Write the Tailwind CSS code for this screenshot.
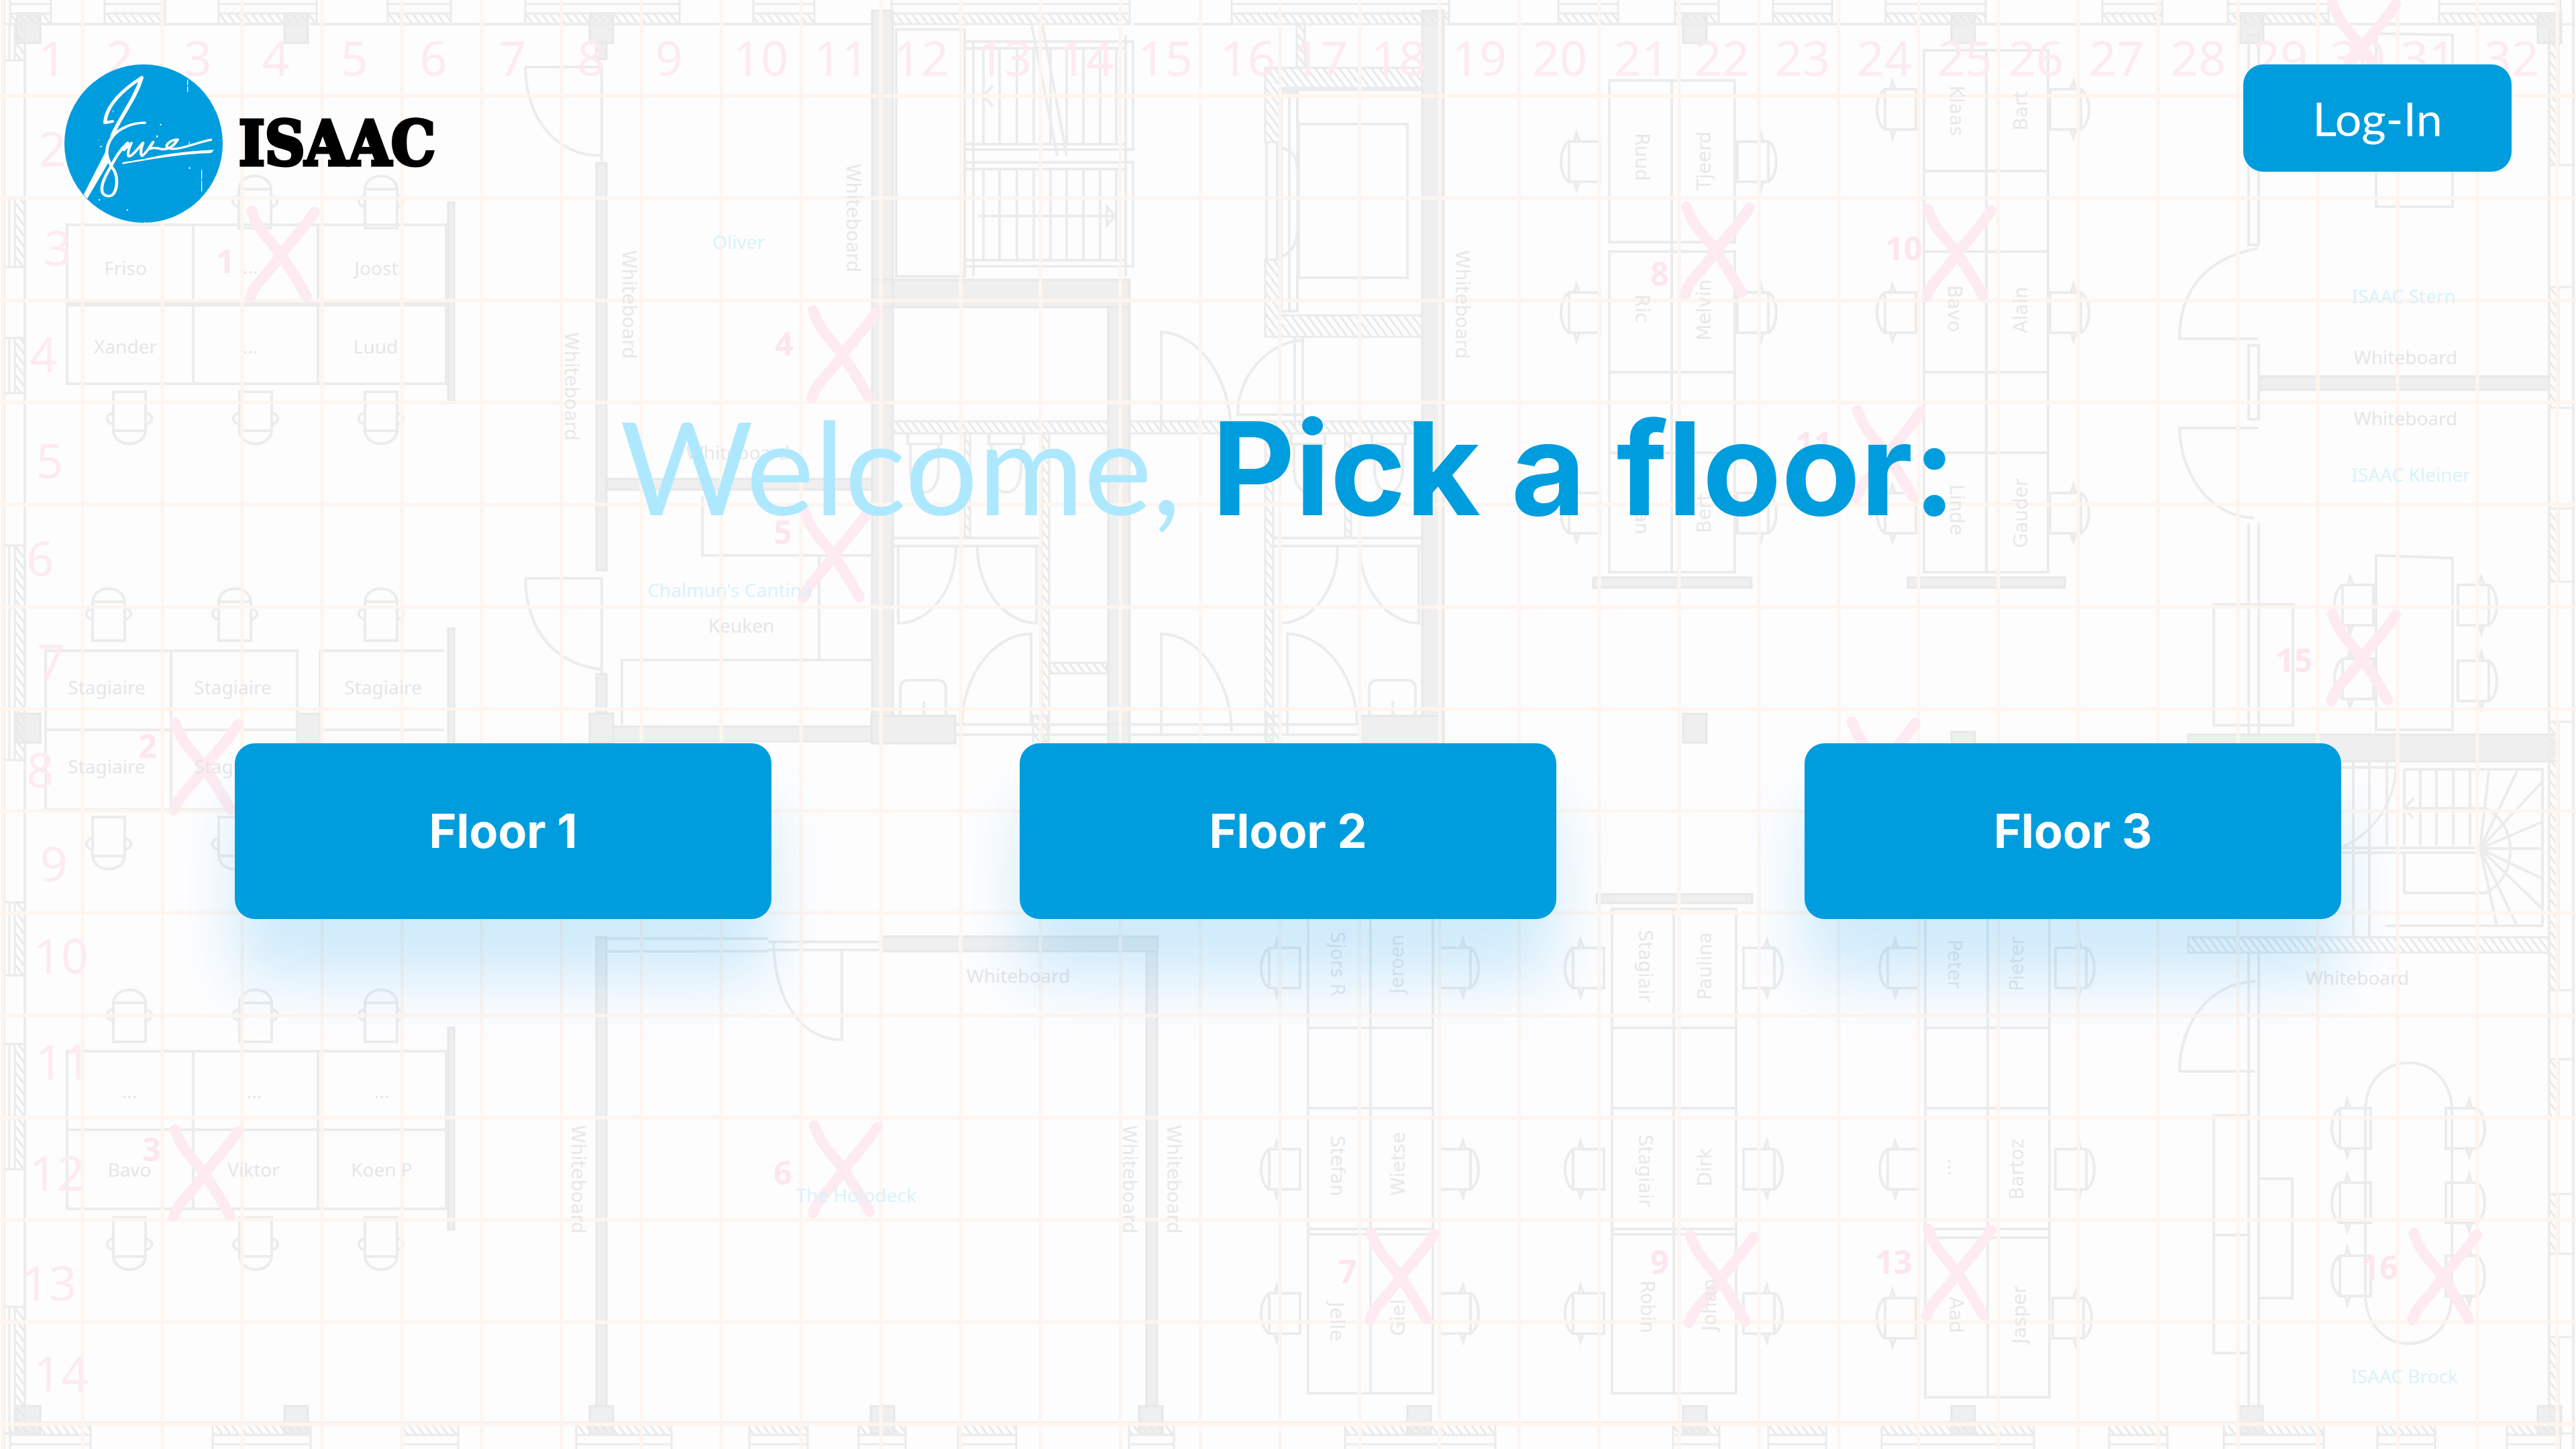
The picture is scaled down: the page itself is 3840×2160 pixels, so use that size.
<!DOCTYPE html>
<html lang="en">
<head>
<meta charset="utf-8">
<meta name="viewport" content="width=device-width, initial-scale=1">
<title>ISAAC – Pick a floor</title>
<script src="https://cdn.jsdelivr.net/npm/@tailwindcss/browser@4"></script>
</head>
<body class="relative min-h-screen overflow-x-hidden bg-[#fdfdfe] font-[Lato,sans-serif]">

<!-- Decorative floor plan behind the page -->
<svg class="absolute inset-0 h-full w-full" viewBox="0 0 3840 2160" preserveAspectRatio="xMidYMid slice" aria-hidden="true">
  <defs>
    <pattern id="hatch" width="12" height="16" patternUnits="userSpaceOnUse">
      <path d="M-3 -4L15 20M-15 -4L3 20M9 -4L27 20" stroke="#e9e9e9" stroke-width="3" fill="none"/>
    </pattern>
    <g id="chair">
      <path d="M-24 0V58H24V0ZM-24 0C-22 -26 22 -26 24 0M-25 10C-36 12 -36 24 -25 26M25 10C36 12 36 24 25 26"/>
    </g>
    <g id="side">
      <path d="M-20 -30H26V30H-20ZM-20 -30C-36 -20 -36 20 -20 30M-12 -31L-9 -42L-5 -31M-12 31L-9 42L-5 31"/>
    </g>
    <path id="cross" d="M4 0C14 30 30 42 48 66C64 90 76 110 86 128M98 2C80 30 60 48 46 68C30 95 10 105 2 130"/>
  </defs>

  <!-- walls -->
  <g fill="#efefef" stroke="#e8e8e8" stroke-width="3">
    <path d="M1300 16H1331V1108H1300ZM2120 16H2152V1108H2120ZM1300 417H1684V458H1300ZM1652 458H1684V1108H1652Z"/>
    <path d="M889 243H904V850H889ZM889 1005H904V1063H889ZM889 64H904V88H889ZM889 1397H904V2095H889ZM1709 1397H1725V2095H1709Z"/>
    <path d="M1312 1396H1726V1418H1312ZM914 1083H1300V1105H914ZM905 714H1300V730H905ZM3370 561H3800V581H3370ZM3262 1095H3812V1135H3262Z"/>
    <path d="M1299 1067H1424V1108H1299ZM2028 1067H2152V1108H2028Z"/>
    <path d="M668 302H677V598H668ZM668 937H677V1200H668ZM668 1532H677V1833H668ZM2375 861H2611V876H2375ZM2844 861H3078V876H2844ZM2380 1333H2612V1346H2380Z"/>
    <g id="pillars"></g>
  </g>

  <!-- hatched masonry -->
  <g fill="url(#hatch)" stroke="#ebebeb" stroke-width="3">
    <path d="M1331 628H1652V646H1331ZM1684 628H2120V646H1684ZM1886 101H2120V131H1907V212H1886ZM1886 387H1907V470H2120V502H1886ZM1933 36H1945V101H1933Z"/>
    <path d="M1553 646H1564V1105H1553ZM1886 646H1898V1105H1886ZM1565 988H1650V1004H1565ZM1540 1067H1562V1108H1540ZM1888 1067H1908V1108H1888ZM3262 1397H3800V1420H3262Z"/>
    <path d="M1438 646H1446V800H1438ZM2005 646H2014V800H2005ZM1553 646V800"/>
    <g id="windows"></g>
  </g>

  <!-- thin plan lines -->
  <g fill="none" stroke="#ececec" stroke-width="4">
    <path d="M25 36H1300M1690 36H1836M2160 36H3815M25 2121H3815M6 0V2160M37 64V2095M3800 64V2095M3836 0V2160"/>
    <!-- left rooms: doors, meeting room front, kitchen -->
    <path d="M783 100H897V240M783 100C785 180 830 232 897 232M783 862H897V1004M783 862C785 945 830 990 897 998"/>
    <path d="M905 1399H1145M905 1418H1145M1145 1404H1312M1145 1416H1312M1153 1404C1155 1500 1200 1550 1255 1550V1418"/>
    <path d="M1300 984H927V1080M1221 828V984M1047 740V828H1300M1300 828V984"/>
    <!-- stairwell -->
    <path d="M1336 44H1438V412H1336ZM1440 62H1689V223H1440M1440 72H1680M1440 215H1680M1440 242H1689V397H1440M1440 252H1680M1440 388H1680M1451 62V412M1678 52V412"/>
    <path d="M1466 72V215M1490 72V215M1516 72V215M1541 72V215M1566 72V215M1590 72V215M1615 72V215M1640 72V215M1664 72V215M1466 252V388M1490 252V388M1516 252V388M1541 252V388M1566 252V388M1590 252V388M1615 252V388M1640 252V388M1664 252V388"/>
    <path d="M1458 322H1660M1650 308L1662 322L1650 336ZM1480 128L1466 143L1480 158M1538 38L1576 232M1554 38L1590 232"/>
    <!-- lift -->
    <path d="M1936 185H2098V414H1936ZM1910 138H1934V464H1910ZM1922 138V464M1888 212V387M1904 212V387M2120 134H1910"/>
    <path d="M1912 221C1932 226 1934 240 1934 260V340C1934 365 1925 375 1912 382"/>
    <!-- hall and washroom doors -->
    <path d="M1731 646V495C1785 497 1833 560 1835 640M1942 502V640M1930 502V640M1942 507C1890 510 1845 560 1845 618H1942"/>
    <path d="M1331 802H1553M1331 814H1553M1898 802H2120M1898 814H2120"/>
    <path d="M1425 815C1425 880 1385 929 1339 929V815M1457 815C1457 880 1500 929 1545 929V815M1994 815C1994 880 1955 929 1908 929M2027 815C2027 880 2070 929 2115 929V815"/>
    <path d="M1537 1080V945C1480 945 1434 1010 1434 1080M1731 1094V945C1790 945 1836 1020 1836 1090M1919 1094V945C1975 945 2023 1010 2023 1080"/>
    <path d="M1424 1080H2028M1424 1095H2028M1342 1065V1028Q1342 1014 1354 1014H1398Q1410 1014 1410 1028V1065M2041 1065V1028Q2041 1014 2053 1014H2098Q2110 1014 2110 1028V1065M1377 1045V1065M2076 1045V1065"/>
    <path d="M1353 646V662H1403V646M1357 662V700C1357 745 1399 745 1399 700V662M1474 646V662H1526V646M1478 662V700C1478 745 1522 745 1522 700V662M1925 646V662H1975V646M1929 662V700C1929 745 1971 745 1971 700V662M2045 646V662H2095V646M2049 662V700C2049 745 2091 745 2091 700V662"/>
    <!-- left desks -->
    <path d="M100 335H665V572H100ZM288 335V572M474 335V572M68 970H443V1207H68ZM68 1088H443M255 970V1207M662 970H477V1207H662M477 1088H662M100 1567H665V1802H100ZM100 1684H665M288 1567V1802M474 1567V1802"/>
    <path d="M100 452H665" stroke-width="10"/>
    <!-- desk blocks -->
    <path d="M2399 120H2586V361H2399ZM2399 375H2586V853H2399ZM2492 120V853M2399 555H2586M2399 675H2586M2868 75H3053V853H2868ZM2961 75V853M2868 255H3053M2868 375H3053M2868 555H3053M2868 675H3053"/>
    <path d="M1950 1370V2077H2136V1370M2043 1370V2077M1950 1532H2136M1950 1652H2136M1950 1832H2136M1950 1840H2136M2403 1355H2588V2077H2403ZM2495 1355V2077M2403 1532H2588M2403 1652H2588M2403 1832H2588M2403 1840H2588M2870 1370V2083H3055V1370M2963 1370V2083M2870 1532H3055M2870 1652H3055M2870 1832H3055M2870 1845H3055"/>
    <!-- right rooms -->
    <path d="M3352 52V365H3367V52ZM3352 515V625H3367V515ZM3352 780V1095M3367 780V1095M3352 1420V2095M3367 1420V2095"/>
    <path d="M3366 370C3290 385 3249 430 3249 505H3366M3360 772C3290 770 3249 700 3249 638H3366M3362 1463C3290 1465 3249 1530 3249 1597H3362"/>
    <path d="M3542 50L3656 52V308H3542ZM3542 828L3656 832V1088H3542ZM3300 901H3418V1081H3300ZM3350 1663H3300V2017H3350M3300 1841H3350M3367 1757H3417V1935H3367"/>
    <path d="M3526 1657C3526 1560 3655 1560 3655 1657V1928C3655 2028 3526 2028 3526 1928Z"/>
    <path d="M3490 1144H3573M3584 1147H3790V1380H3556M3584 1147V1260M3508 1135V1396M3532 1135V1396M3558 1135V1260M3632 1147V1260M3608 1147V1260M3657 1147V1260M3682 1147V1260M3490 1264H3690M3490 1271H3690M3584 1205H3706M3584 1331H3706Q3742 1310 3742 1268T3706 1205M3598 1190L3584 1205L3598 1220M3573 1135C3570 1200 3540 1240 3490 1264"/>
    <path d="M3697 1265L3710 1150M3697 1265L3752 1150M3697 1265L3790 1165M3697 1265L3790 1225M3697 1265H3790M3697 1265L3790 1310M3697 1265L3790 1355M3697 1265L3752 1380M3697 1265L3722 1380M3584 1271V1331"/>
    <g id="chairs"></g>
  </g>

  <!-- coordinate grid -->
  <path id="grid" fill="none" stroke="#fef5ef" stroke-width="5"/>

  <g id="crosses" fill="none" stroke="#fdebf1" stroke-width="16" stroke-linecap="round"></g>
  <g id="numbers" fill="#fdebf0" font-family="'Noto Sans',sans-serif" font-size="72" text-anchor="middle"></g>
  <g id="marks" fill="#fde6ed" font-family="'Noto Sans',sans-serif" font-size="48" font-weight="700" text-anchor="middle"></g>
  <g id="names" fill="#e6e6e7" font-family="'Noto Sans',sans-serif" font-size="28" text-anchor="middle"></g>
  <g id="upright" fill="#e8e8e9" font-family="'DejaVu Sans',sans-serif" font-size="28" text-anchor="middle"></g>
</svg>

<header class="relative flex items-start justify-between p-24 pb-0">
  <a href="#" aria-label="ISAAC home" class="flex items-center gap-6 text-black">
    <svg class="size-[236px]" viewBox="0 0 236 236" aria-hidden="true">
      <circle cx="118" cy="118" r="118" fill="#009dde"/>
      <g transform="scale(.41 .3333) translate(-88 -113)" fill="none" stroke="#fff" stroke-width="13" stroke-linejoin="round" stroke-linecap="round">
        <path d="M262 368L236 374C238 300 300 225 369 172C350 260 290 350 262 430"/>
        <path d="M369 172C340 280 285 355 262 435"/>
        <path d="M380 374C330 374 285 402 262 437C232 490 240 530 262 575C288 610 282 702 250 702C205 700 228 630 250 585C268 545 285 500 318 464" stroke-width="11"/>
        <path d="M318 464C312 480 300 495 304 496L332 464C322 490 316 515 322 524C335 524 355 490 374 463C366 490 364 515 370 522C382 518 398 480 411 460C400 480 394 496 400 490C412 484 425 486 440 492C472 496 490 470 500 449C480 449 450 470 464 487C500 502 560 465 620 450" stroke-width="10"/>
        <path d="M234 512L158 695L171 714L250 548ZM262 430L234 512L245 545L248 480Z" fill="#fff" stroke="none"/>
        <path d="M298 559L300 551L380 535C460 512 540 500 632 495L622 509C500 515 420 535 298 559Z" fill="#fff" stroke="none"/>
        <path d="M425 433V437M221 480V481M543 576V577M317 763V764M438 382V383M215 718V719" stroke-width="6"/>
        <path d="M536 182V205M536 212V235M587 585V625M587 632V680M542 460V475M265 320V324M214 452V453M380 819V820" stroke-width="3"/>
      </g>
    </svg>
    <span class="font-['DejaVu_Serif_Condensed','DejaVu_Serif',serif] text-[92px] leading-none font-bold [-webkit-text-stroke:5px_black]">ISAAC</span>
  </a>
  <button type="button" class="h-40 w-[400px] rounded-[30px] bg-[#009dde] text-[70px] leading-none text-white">Log-In</button>
</header>

<main class="relative">
  <h1 class="mt-[242px] h-60 text-center font-[Inter,sans-serif] text-[192px] leading-[240px] font-bold text-[#009dde]"><span class="font-[Lato,sans-serif] font-normal text-[#aee8ff]">Welcome,</span> Pick a floor:</h1>
  <nav aria-label="Floors" class="mt-[294px] grid grid-cols-3 justify-items-center px-[165px] font-[Inter,sans-serif] text-[70px] leading-none font-bold text-white">
    <button type="button" class="h-[262px] w-[800px] rounded-[30px] bg-[#009dde] shadow-[0_90px_90px_rgba(0,157,240,0.18)]">Floor 1</button>
    <button type="button" class="h-[262px] w-[800px] rounded-[30px] bg-[#009dde] shadow-[0_90px_90px_rgba(0,157,240,0.18)]">Floor 2</button>
    <button type="button" class="h-[262px] w-[800px] rounded-[30px] bg-[#009dde] shadow-[0_90px_90px_rgba(0,157,240,0.18)]">Floor 3</button>
  </nav>
</main>

<script>
{
  const fill = (id, parts) => { document.getElementById(id).innerHTML = parts.join(''); };
  const rect = (x1, y1, x2, y2) => `<rect x="${x1}" y="${y1}" width="${x2 - x1}" height="${y2 - y1}"/>`;
  const label = ([t, x, y, c]) => `<text x="${x}" y="${y}"${c ? ` fill="${c}"` : ''}>${t}</text>`;

  // grid: 33 columns, 14 rows
  let d = '';
  for (let i = 0; i < 33; i++) d += `M${4 + 119 * i} 0V2160`;
  for (let i = 0; i < 14; i++) d += `M0 ${Math.round(143 + 152.3 * i)}H3840`;
  document.getElementById('grid').setAttribute('d', d);

  fill('pillars', [
    ...[25, 424, 879, 2509, 2909, 3339, 3783].map(x => rect(x, 20, x + 35, 64)),
    ...[25, 424, 879, 1298, 1698, 2098, 2509, 2909, 3338, 3783].map(x => rect(x, 2096, x + 35, 2137)),
    ...[25, 443, 879, 2509].map(x => rect(x, 1064, x + 35, 1107)), rect(2909, 1091, 2944, 1130),
  ]);

  // window niches along the outer walls
  const north = [[15,76],[156,246],[326,472],[578,672],[783,1013],[1123,1214],[1329,1684],[1836,2160],[2323,2412],[2497,2562],[2643,2731],[2811,2960],[3134,3223],[3321,3471],[3636,3817]];
  const south = [[15,135],[317,463],[598,683],[859,1001],[1117,1204],[1280,1350],[1428,1515],[1683,1750],[2005,2229],[2494,2563],[2636,2722],[2805,3032],[3144,3231],[3315,3464],[3544,3630],[3737,3817]];
  const west = [[36,90],[295,398],[504,586],[813,1133],[1345,1454],[1556,1743],[1948,2137]];
  const east = [[36,246],[428,608],[758,867],[1076,1476],[1579,1666],[1780,1869],[1993,2137]];
  fill('windows', [
    ...north.map(([a, b]) => rect(a, 20, b, 36) + `<path fill="none" d="M${a} 20V0M${b} 20V0M${a} 6H${b}"/>`),
    ...south.map(([a, b]) => rect(a, 2123, b, 2139) + `<path fill="none" d="M${a} 2139V2160M${b} 2139V2160M${a} 2153H${b}"/>`),
    ...west.map(([a, b]) => rect(22, a, 37, b) + `<path fill="none" d="M6 ${a}H22M6 ${b}H22M14 ${a}V${b}"/>`),
    ...east.map(([a, b]) => rect(3800, a, 3814, b) + `<path fill="none" d="M3814 ${a}H3836M3814 ${b}H3836"/>`),
  ]);

  const up = [[380,282],[568,282],[162,897],[350,897],[568,897],[193,1495],[381,1495],[568,1495]];
  const down = [[193,642],[381,642],[568,642],[162,1276],[350,1276],[193,1873],[381,1873],[568,1873]];
  const leftSide = [[2359,241],[2359,466],[2359,765],[2830,163],[2830,466],[2830,765],[1912,1443],[1912,1743],[1912,1958],[2365,1443],[2365,1743],[2365,1958],[2834,1443],[2834,1743],[2830,1965],[3512,163],[3512,902],[3512,1012],[3508,1682],[3508,1793],[3508,1902]];
  const rightSide = [[2616,241],[2616,466],[2616,765],[3082,163],[3082,466],[3082,765],[2172,1443],[2172,1743],[2172,1958],[2625,1443],[2625,1743],[2625,1958],[3090,1443],[3090,1743],[3086,1965],[3690,163],[3690,902],[3690,1015],[3672,1682],[3672,1793],[3672,1902]];
  fill('chairs', [
    ...up.map(([x, y]) => `<use href="#chair" transform="translate(${x} ${y})"/>`),
    ...down.map(([x, y]) => `<use href="#chair" transform="translate(${x} ${y}) rotate(180)"/>`),
    ...leftSide.map(([x, y]) => `<use href="#side" transform="translate(${x} ${y})"/>`),
    ...rightSide.map(([x, y]) => `<use href="#side" transform="translate(${x} ${y}) rotate(180)"/>`),
  ]);

  fill('crosses', [[371,314],[1208,463],[1195,762],[257,1078],[257,1684],[1210,1678],[2510,308],[2870,312],[2765,612],[2757,1076],[3473,915],[3473,5],[2040,1838],[2516,1842],[2870,1832],[3594,1838]]
    .map(([x, y]) => `<use href="#cross" x="${x}" y="${y}"/>`));

  fill('numbers', [
    ...[78,178,295,411,528,646,764,881,997,1134,1254,1373,1497,1619,1737,1860,1968,2085,2205,2325,2447,2567,2687,2809,2929,3035,3155,3277,3399,3515,3620,3744].map((x, i) => label([i + 1, x, 113])),
    ...[[78,248],[86,396],[65,555],[74,713],[60,859],[76,1012],[60,1174],[80,1314],[91,1451],[94,1609],[85,1775],[73,1939],[91,2074]].map(([x, y], i) => label([i + 2, x, y])),
  ]);
  fill('marks', [[1,336,407],[2,220,1130],[3,226,1731],[4,1169,530],[5,1167,811],[6,1167,1766],[7,2009,1913],[8,2474,426],[9,2474,1899],[10,2838,388],[11,2704,679],[13,2823,1899],[15,3420,1002],[16,3547,1907]].map(label));

  const blue = '#daf2fb';
  fill('names', [['Friso',187,410],['...',373,408],['Joost',561,410],['Xander',187,527],['...',373,527],['Luud',560,527],['Whiteboard',1100,685],['Oliver',1101,371,blue],["Chalmun's Cantina",1088,890,blue],['Keuken',1105,943],
    ['Stagiaire',159,1035],['Stagiaire',347,1035],['Stagiaire',571,1035],['Stagiaire',159,1153],['Stagiaire',347,1153],['...',193,1637],['...',379,1637],['...',569,1637],['Bavo',193,1754],['Viktor',378,1754],['Koen P',569,1754],
    ['The Holodeck',1276,1792,blue],['Whiteboard',1518,1465],['Whiteboard',3586,543],['Whiteboard',3586,634],['Whiteboard',3514,1468],['ISAAC Stern',3583,452,blue],['ISAAC Kleiner',3594,718,blue],['ISAAC Brock',3584,2062,blue]].map(label));

  const turned = [['Whiteboard',938,454,90],['Whiteboard',852,576,90],['Whiteboard',1272,325,90],['Whiteboard',2180,454,90],['Whiteboard',862,1758,90],['Whiteboard',1684,1758,90],['Whiteboard',1750,1758,90],
    ['Ruud',2448,234,90],['Ric',2448,460,90],['Stan',2448,765,90],['Tjeerd',2540,240,-90],['Melvin',2540,462,-90],['Bert',2540,765,-90],['Klaas',2917,165,90],['Bavo',2914,460,90],['Linde',2917,760,90],['Bart',3012,165,-90],['Alain',3012,462,-90],['Gauder',3012,765,-90],
    ['Sjors R',1994,1437,90],['Jeroen',2082,1437,-90],['Stefan',1994,1738,90],['Wietse',2084,1735,-90],['Jelle',1993,1970,90],['Giel',2084,1964,-90],
    ['Stagiair',2453,1440,90],['Paulina',2541,1440,-90],['Stagiair',2453,1745,90],['Dirk',2541,1740,-90],['Robin',2456,1948,90],['Johan',2548,1945,-90],['Peter',2914,1437,90],['Pieter',3006,1437,-90],['...',2914,1740,90],['Bartoz',3006,1743,-90],['Aad',2916,1960,90],['Jasper',3010,1960,-90]];
  fill('upright', turned.map(([t, x, y, r]) => `<text transform="translate(${x} ${y}) rotate(${r})" y="10">${t}</text>`));
}
</script>
</body>
</html>
